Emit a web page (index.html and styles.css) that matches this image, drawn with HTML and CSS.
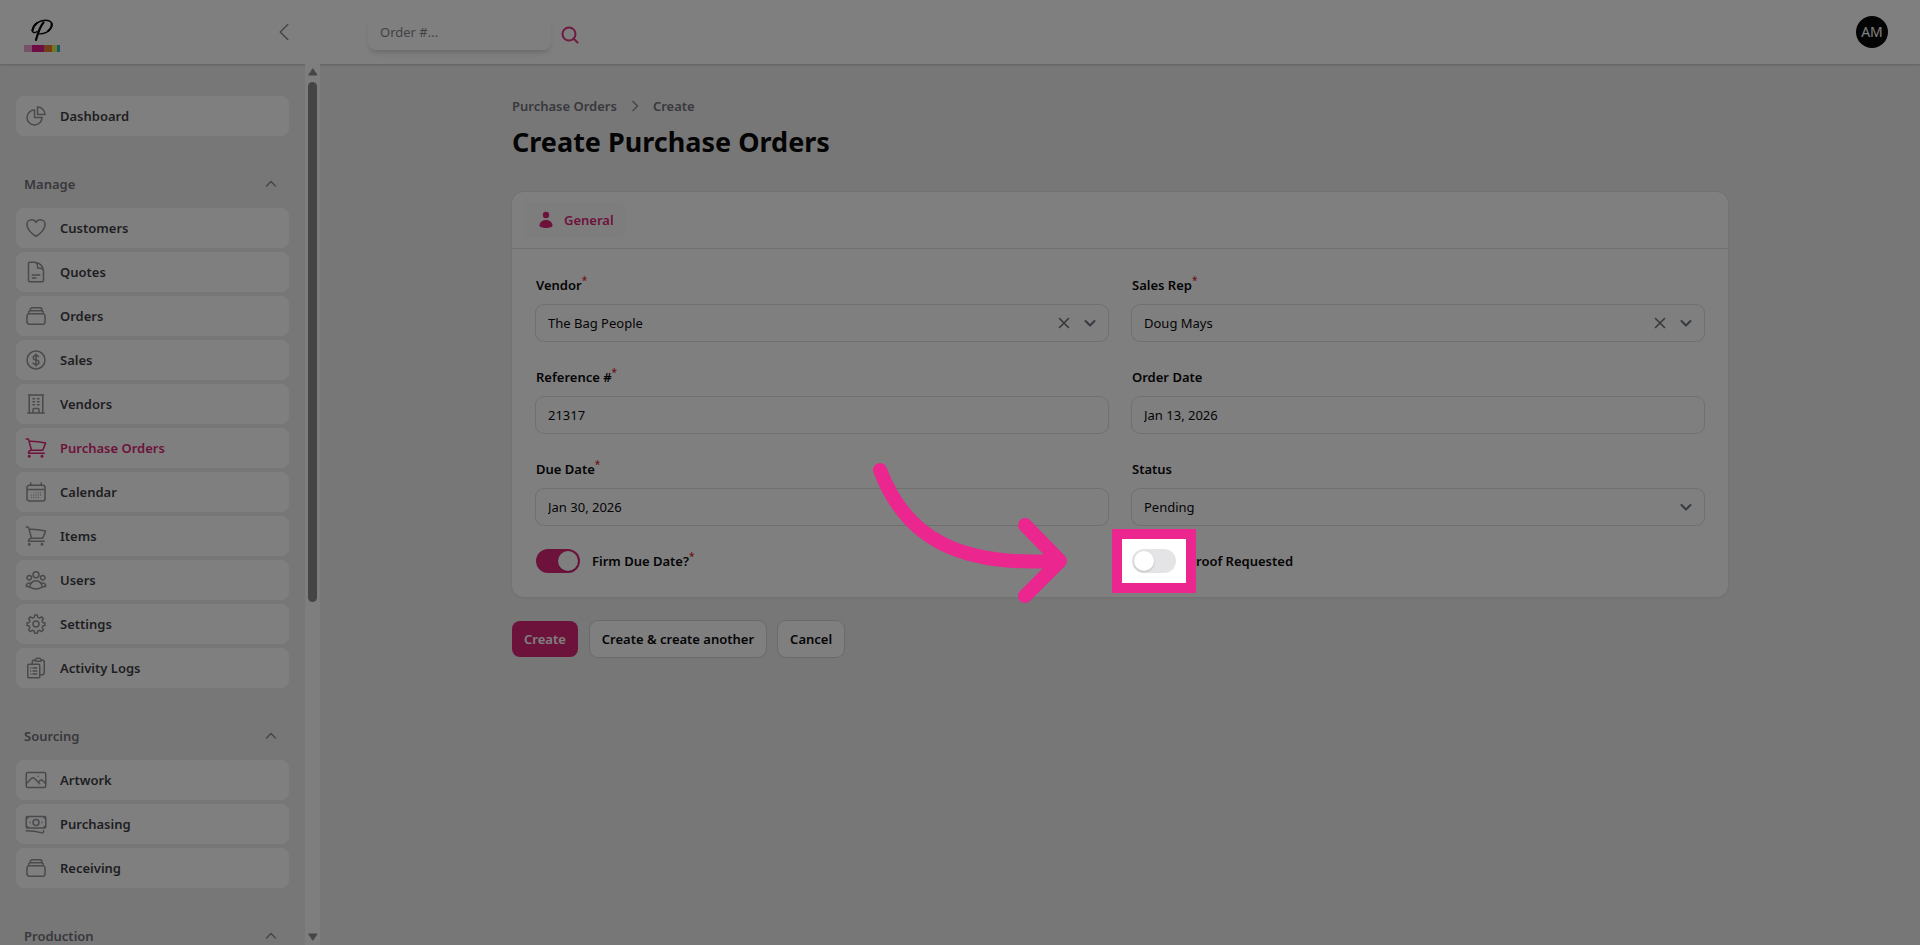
FILE: index.html
```html
<!DOCTYPE html>
<html lang="en">
<head>
	<meta charset="utf-8">
	<meta name="viewport" content="width=device-width, initial-scale=1.0">
	<title>Create Purchase Orders</title>
	<link rel="stylesheet" href="styles.css">
</head>
<body>
	<!-- shared icons -->
	<svg class="sprite" aria-hidden="true">
		<symbol id="i-up" viewBox="0 0 20 20"><path d="M5.500 12l4.500-4.500 4.500 4.500"/></symbol>
		<symbol id="i-down" viewBox="0 0 20 20"><path d="M5.500 8l4.500 4.500 4.500-4.500"/></symbol>
		<symbol id="i-x" viewBox="0 0 20 20"><path d="M5.500 5.500l9 9M14.500 5.500l-9 9"/></symbol>
		<symbol id="i-cart" viewBox="0 0 24 24"><path d="M2.200 3h1.400c.5 0 1 .35 1.100.85l2.800 10.400M7.500 14.250a3 3 0 0 0-3 3h15.750M7.500 14.250h11.200c1.100-2.300 2.100-4.700 2.900-7.150A60 60 0 0 0 5.100 5.270M6 20.250a.75.75 0 1 1-1.500 0 .75.75 0 0 1 1.500 0zm12.750 0a.75.75 0 1 1-1.500 0 .75.75 0 0 1 1.500 0z"/></symbol>
		<symbol id="i-stack" viewBox="0 0 24 24"><path d="M6 6.880V6a2.250 2.250 0 0 1 2.250-2.250h7.500A2.250 2.250 0 0 1 18 6v.880M6 6.880c.23-.08.490-.130.750-.130h10.500c.26 0 .510.050.750.130M6 6.880A2.250 2.250 0 0 0 4.500 9v.880m13.500-3A2.250 2.250 0 0 1 19.500 9v.880m0 0a2.250 2.250 0 0 0-.750-.130H5.250c-.260 0-.520.050-.750.130m15 0A2.250 2.250 0 0 1 21 12v6a2.250 2.250 0 0 1-2.250 2.250H5.250A2.250 2.250 0 0 1 3 18v-6c0-.980.630-1.810 1.500-2.120"/></symbol>
	</svg>

	<header class="topbar">
		<div class="brand">
			<a href="#" class="logo" aria-label="Home">
				<svg viewBox="0 0 36 34" width="36" height="34">
					<g fill="none" stroke="#050505" stroke-linecap="round">
						<path stroke-width="2.200" d="M19.500 4.500C15.500 9 14 15 12 22"/>
						<path stroke-width="1.400" d="M13 13.500c-2.500 2-4.900 1.200-4.700-1.500C9 6.500 15 2.300 21.500 2.300c5.500 0 7.600 3 6 6.700-1.800 4.500-7.500 7.500-13.500 6.800"/>
						<path stroke-width="2" d="M8.400 12.800C9 9.500 10.500 7 13 5M27.600 5.500c.4 3-1 5.500-3.600 7.500"/>
					</g>
					<path fill="#efa4cc" d="M0 27h8v7H0z"/>
					<path fill="#d91c8b" d="M8 27h12v7H8z"/>
					<path fill="#e57a35" d="M20 27h8v7h-8z"/>
					<path fill="#eded4c" d="M28 27h5v7h-5z"/>
					<path fill="#20b4d4" d="M33 27h3v7h-3z"/>
				</svg>
			</a>
			<button type="button" class="collapse" aria-label="Collapse sidebar">
				<svg class="icon" viewBox="0 0 24 24"><path d="M15.750 19.500L8.250 12l7.500-7.500"/></svg>
			</button>
		</div>
		<form class="search">
			<input type="text" placeholder="Order #..." aria-label="Order number">
			<button type="button" aria-label="Search">
				<svg viewBox="0 0 20 20"><circle cx="9" cy="9" r="6.500"/><path d="M13.700 13.700L17.500 17.500"/></svg>
			</button>
		</form>
		<button type="button" class="avatar">AM</button>
	</header>

	<div class="layout">
		<aside class="sidebar">
			<nav class="nav">
				<ul class="group">
					<li><a href="#"><svg class="icon" viewBox="0 0 24 24"><path d="M10.500 6a7.500 7.500 0 1 0 7.500 7.500h-7.500V6z"/><path d="M13.500 10.500H21A7.500 7.500 0 0 0 13.500 3v7.500z"/></svg>Dashboard</a></li>
				</ul>
				<div class="group">
					<button type="button" class="group-title">Manage<svg><use href="#i-up"/></svg></button>
					<ul>
						<li><a href="#"><svg class="icon" viewBox="0 0 24 24"><path d="M21 8.250c0-2.480-2.100-4.500-4.690-4.500-1.930 0-3.600 1.130-4.310 2.730-.710-1.600-2.380-2.730-4.310-2.730C5.100 3.750 3 5.770 3 8.250c0 7.220 9 12 9 12s9-4.780 9-12z"/></svg>Customers</a></li>
						<li><a href="#"><svg class="icon" viewBox="0 0 24 24"><path d="M19.500 14.250v-2.620a3.380 3.380 0 0 0-3.380-3.380h-1.500a1.120 1.120 0 0 1-1.120-1.120v-1.500a3.380 3.380 0 0 0-3.380-3.380H8.250m0 12.750h7.500m-7.500 3H12M10.500 2.250H5.630c-.620 0-1.130.5-1.130 1.120v17.250c0 .620.510 1.130 1.130 1.130h12.750c.620 0 1.120-.510 1.120-1.130V11.250a9 9 0 0 0-9-9z"/></svg>Quotes</a></li>
						<li><a href="#"><svg class="icon"><use href="#i-stack"/></svg>Orders</a></li>
						<li><a href="#"><svg class="icon" viewBox="0 0 24 24"><path d="M12 6v12m-3-2.820l.880.660c1.170.880 3.070.880 4.240 0s1.170-2.300 0-3.180C13.540 12.220 12.770 12 12 12c-.730 0-1.450-.220-2-.660-1.110-.880-1.110-2.300 0-3.180s2.900-.880 4.010 0l.410.330M21 12a9 9 0 1 1-18 0 9 9 0 0 1 18 0z"/></svg>Sales</a></li>
						<li><a href="#"><svg class="icon" viewBox="0 0 24 24"><path d="M3.750 21h16.500M4.500 3h15M5.250 3v18m13.500-18v18M9 6.750h1.500m-1.500 3h1.500m-1.500 3h1.500m3-6H15m-1.500 3H15m-1.500 3H15M9 21v-3.380c0-.620.500-1.120 1.130-1.120h3.750c.620 0 1.120.5 1.120 1.120V21"/></svg>Vendors</a></li>
						<li><a href="#" class="active"><svg class="icon"><use href="#i-cart"/></svg>Purchase Orders</a></li>
						<li><a href="#"><svg class="icon" viewBox="0 0 24 24"><path d="M6.750 3v2.250M17.250 3v2.250M3 18.750V7.500a2.250 2.250 0 0 1 2.250-2.250h13.500A2.250 2.250 0 0 1 21 7.500v11.250M3 18.750A2.250 2.250 0 0 0 5.250 21h13.500A2.250 2.250 0 0 0 21 18.750M3 9.500h18"/><path stroke-width="1.200" d="M12 12.750h.01M12 15h.01M12 17.250h.01M9.750 15h.01M9.750 17.250h.01M7.500 15h.01M7.500 17.250h.01M14.250 12.750h.01M14.250 15h.01M14.250 17.250h.01M16.500 12.750h.01M16.500 15h.01"/></svg>Calendar</a></li>
						<li><a href="#"><svg class="icon"><use href="#i-cart"/></svg>Items</a></li>
						<li><a href="#"><svg class="icon" viewBox="0 0 24 24"><path d="M18 18.720a9.090 9.090 0 0 0 3.740-.480 3 3 0 0 0-4.680-2.720m.940 3.200v.030c0 .230-.010.450-.040.670A11.940 11.940 0 0 1 12 21c-2.170 0-4.210-.580-5.960-1.580A6.060 6.060 0 0 1 6 18.720m12 0a5.970 5.970 0 0 0-.940-3.200m0 0A6 6 0 0 0 12 12.750a6 6 0 0 0-5.060 2.770m0 0a3 3 0 0 0-4.680 2.720 8.990 8.990 0 0 0 3.740.480m.940-3.200A5.970 5.970 0 0 0 6 18.720M15 6.750a3 3 0 1 1-6 0 3 3 0 0 1 6 0zm6 3a2.250 2.250 0 1 1-4.500 0 2.250 2.250 0 0 1 4.500 0zm-13.500 0a2.250 2.250 0 1 1-4.500 0 2.250 2.250 0 0 1 4.500 0z"/></svg>Users</a></li>
						<li><a href="#"><svg class="icon" viewBox="0 0 24 24"><path d="M10.700 3h2.600l.5 2.400 1.700.7 2.100-1.300 1.800 1.800-1.300 2.100.7 1.700 2.200.5v2.600l-2.200.5-.7 1.700 1.300 2.100-1.800 1.800-2.100-1.300-1.700.7-.5 2.200h-2.600l-.5-2.200-1.700-.7-2.100 1.300-1.800-1.800 1.300-2.100-.7-1.700-2.200-.5v-2.600l2.200-.5.7-1.700-1.300-2.100 1.800-1.800 2.100 1.300 1.700-.7z"/><circle cx="12" cy="12" r="3"/></svg>Settings</a></li>
						<li><a href="#"><svg class="icon" viewBox="0 0 24 24"><path d="M9 12h3.750M9 15h3.750M9 18h3.750m3 .750H18a2.250 2.250 0 0 0 2.250-2.250V6.110c0-1.140-.840-2.100-1.980-2.190a48 48 0 0 0-1.120-.080m-5.800 0a2.250 2.250 0 0 0-.100.660c0 .410.340.750.750.750h4.500a.75.75 0 0 0 .750-.750 2.250 2.250 0 0 0-.100-.660m-5.800 0A2.250 2.250 0 0 1 13.500 2.250H15c1.010 0 1.870.670 2.150 1.590m-5.800 0c-.380.020-.750.050-1.130.080C9.100 4.010 8.250 4.970 8.250 6.110V8.250m0 0H4.880c-.630 0-1.130.500-1.130 1.130v11.250c0 .620.500 1.120 1.130 1.120h9.750c.620 0 1.120-.500 1.120-1.120V9.380c0-.630-.500-1.130-1.120-1.130H8.250zM6.750 12h.01M6.750 15h.01M6.750 18h.01"/></svg>Activity Logs</a></li>
					</ul>
				</div>
				<div class="group">
					<button type="button" class="group-title">Sourcing<svg><use href="#i-up"/></svg></button>
					<ul>
						<li><a href="#"><svg class="icon" viewBox="0 0 24 24"><path d="M2.250 15.750l5.160-5.160a2.250 2.250 0 0 1 3.180 0l5.160 5.160m-1.500-1.500l1.410-1.410a2.250 2.250 0 0 1 3.180 0l2.910 2.910M3.750 19.500h16.500a1.500 1.500 0 0 0 1.500-1.500V6a1.500 1.500 0 0 0-1.500-1.500H3.750A1.500 1.500 0 0 0 2.250 6v12a1.500 1.500 0 0 0 1.500 1.500zM14.250 8.250h.01"/></svg>Artwork</a></li>
						<li><a href="#"><svg class="icon" viewBox="0 0 24 24"><path d="M2.250 18.750a60 60 0 0 1 15.800 2.100c.72.200 1.450-.340 1.450-1.090V18.750M3.400 4.500h17.200c.64 0 1.150.5 1.150 1.130v9.240c0 .63-.5 1.130-1.150 1.130H3.400c-.64 0-1.150-.5-1.150-1.130V5.630c0-.63.5-1.130 1.150-1.130zM2.250 6.300a1.800 1.800 0 0 0 1.800-1.800M21.750 6.300a1.800 1.800 0 0 1-1.800-1.800M2.250 14.200a1.800 1.800 0 0 1 1.800 1.800M21.750 14.200a1.800 1.800 0 0 0-1.800 1.800M15 10.500a3 3 0 1 1-6 0 3 3 0 0 1 6 0zm3 0h.01M6 10.500h.01"/></svg>Purchasing</a></li>
						<li><a href="#"><svg class="icon"><use href="#i-stack"/></svg>Receiving</a></li>
					</ul>
				</div>
				<div class="group">
					<button type="button" class="group-title">Production<svg><use href="#i-up"/></svg></button>
				</div>
			</nav>
			<div class="scrollbar" aria-hidden="true">
				<svg viewBox="0 0 10 8"><path d="M5 1L9 7H1z"/></svg>
				<div class="track"><div class="thumb"></div></div>
				<svg viewBox="0 0 10 8"><path d="M1 1h8L5 7z"/></svg>
			</div>
		</aside>

		<main class="main">
			<div class="page">
				<nav class="crumbs">
					<a href="#">Purchase Orders</a>
					<svg viewBox="0 0 20 20"><path d="M8 5.500l4.500 4.500L8 14.500"/></svg>
					<a href="#">Create</a>
				</nav>
				<h1>Create Purchase Orders</h1>

				<form>
					<section class="card">
						<div class="tabs">
							<button type="button" class="tab">
								<svg viewBox="0 0 20 20"><circle cx="10" cy="5" r="3.200"/><path d="M3.400 15.200C4 11.800 6.800 10 10 10s6 1.800 6.600 5.200c0 1.700-3.100 2.800-6.600 2.800s-6.600-1.100-6.600-2.800z"/></svg>
								General
							</button>
						</div>
						<div class="fields">
							<div class="field">
								<label for="vendor">Vendor<sup>*</sup></label>
								<div class="control">
									<input type="text" id="vendor" value="The Bag People">
									<button type="button" aria-label="Clear vendor"><svg><use href="#i-x"/></svg></button>
									<button type="button" aria-label="Choose vendor" class="arrow"><svg><use href="#i-down"/></svg></button>
								</div>
							</div>
							<div class="field">
								<label for="rep">Sales Rep<sup>*</sup></label>
								<div class="control">
									<input type="text" id="rep" value="Doug Mays">
									<button type="button" aria-label="Clear sales rep"><svg><use href="#i-x"/></svg></button>
									<button type="button" aria-label="Choose sales rep" class="arrow"><svg><use href="#i-down"/></svg></button>
								</div>
							</div>
							<div class="field">
								<label for="reference">Reference #<sup>*</sup></label>
								<div class="control"><input type="text" id="reference" value="21317"></div>
							</div>
							<div class="field">
								<label for="order-date">Order Date</label>
								<div class="control"><input type="text" id="order-date" value="Jan 13, 2026"></div>
							</div>
							<div class="field">
								<label for="due-date">Due Date<sup>*</sup></label>
								<div class="control"><input type="text" id="due-date" value="Jan 30, 2026"></div>
							</div>
							<div class="field">
								<label for="status">Status</label>
								<div class="control">
									<select id="status"><option>Pending</option></select>
									<svg class="caret"><use href="#i-down"/></svg>
								</div>
							</div>
							<div class="switch">
								<input type="checkbox" id="firm" checked>
								<label for="firm">Firm Due Date?<sup>*</sup></label>
							</div>
							<div class="switch">
								<input type="checkbox" id="proof">
								<label for="proof">Proof Requested</label>
								<!-- tour highlight: dims everything but the switch -->
								<div class="spotlight"></div>
								<svg class="pointer" viewBox="0 0 200 146"><path d="M10 11C36 80 90 107 184 102M155 66l35 36-35 35"/></svg>
							</div>
						</div>
					</section>
					<div class="actions">
						<button type="submit" class="btn primary">Create</button>
						<button type="button" class="btn">Create &amp; create another</button>
						<button type="button" class="btn">Cancel</button>
					</div>
				</form>
			</div>
		</main>
	</div>
</body>
</html>
```
FILE: styles.css
```css
* {
	box-sizing: border-box;
}
body {
	margin: 0;
	height: 100vh;
	overflow: hidden;
	display: flex;
	flex-direction: column;
	background: #eeeeef;
	color: #09090b;
	font-family: "Noto Sans", "Open Sans", sans-serif;
	font-size: 13px;
	line-height: 24px;
}
button, input, select {
	margin: 0;
	padding: 0;
	border: 0;
	background: none;
	color: inherit;
	font: inherit;
}
button {
	cursor: pointer;
}
a {
	color: inherit;
	text-decoration: none;
}
ul {
	margin: 0;
	padding: 0;
	list-style: none;
}
svg {
	display: block;
	flex: none;
	width: 20px;
	height: 20px;
	fill: none;
	stroke: currentColor;
	stroke-width: 2;
	stroke-linecap: round;
	stroke-linejoin: round;
}
.sprite {
	position: absolute;
	width: 0;
	height: 0;
}
.icon {
	width: 24px;
	height: 24px;
	stroke-width: 1.5;
}

/* top bar */
.topbar {
	flex: none;
	display: flex;
	align-items: center;
	height: 64px;
	padding-right: 32px;
	background: #fff;
	box-shadow: 0 1px 2px rgba(0, 0, 0, 0.2);
}
.brand {
	display: flex;
	align-items: center;
	justify-content: space-between;
	width: 320px;
	padding: 0 24px;
}
.logo svg {
	width: 36px;
	height: 34px;
	margin-top: 6px;
	stroke: none;
}
.collapse {
	color: #8a8a90;
}
.search {
	display: flex;
	align-items: center;
	gap: 9px;
	margin-left: 48px;
}
.search input {
	width: 183px;
	height: 36px;
	padding: 0 12px;
	border-radius: 8px;
	outline: none;
	box-shadow: 0 4px 6px -2px rgba(0, 0, 0, 0.2);
}
.search input::placeholder {
	color: #85858c;
}
.search button {
	padding-top: 6px;
	color: #de3480;
}
.avatar {
	width: 32px;
	height: 32px;
	margin-left: auto;
	border-radius: 50%;
	background: #09090b;
	color: #fff;
	font-size: 14px;
}

.layout {
	flex: 1;
	display: flex;
	min-height: 0;
}

/* sidebar */
.sidebar {
	display: flex;
	flex: none;
	width: 320px;
}
.nav {
	flex: 1;
	display: flex;
	flex-direction: column;
	gap: 28px;
	padding: 32px 16px;
	overflow: hidden;
	font-weight: 600;
}
.group {
	flex: none;
}
.group ul {
	display: grid;
	gap: 4px;
}
.group a {
	display: flex;
	align-items: center;
	gap: 12px;
	height: 40px;
	padding: 0 8px;
	border-radius: 8px;
	background: #fff;
	color: #3f3f46;
}
.group a .icon {
	color: #94949b;
}
.group a.active,
.group a.active .icon {
	color: #db2777;
}
.group-title {
	display: flex;
	align-items: center;
	justify-content: space-between;
	width: 100%;
	height: 40px;
	margin-bottom: 4px;
	padding: 0 8px;
	color: #71717a;
	font-weight: 600;
}
.group-title svg {
	color: #8e8e95;
	stroke-width: 1.5;
}
.scrollbar {
	display: flex;
	flex-direction: column;
	align-items: center;
	gap: 6px;
	width: 15px;
	padding: 4px 0;
	background: #fcfcfc;
}
.scrollbar svg {
	width: 10px;
	height: 8px;
	fill: #8b8b8b;
	stroke: #8b8b8b;
	stroke-width: 1;
}
.track {
	flex: 1;
	width: 9px;
}
.thumb {
	height: 61.5%;
	border-radius: 5px;
	background: #8b8b8b;
}

/* page */
.main {
	flex: 1;
	padding: 30px 32px;
}
.page {
	max-width: 1216px;
	margin: 0 auto;
}
.crumbs {
	display: flex;
	align-items: center;
	gap: 8px;
	color: #71717a;
	font-weight: 600;
}
.crumbs svg {
	color: #8e8e95;
	stroke-width: 1.5;
}
h1 {
	margin: 6px 0 32px;
	font-size: 27px;
	line-height: 36px;
}
.card {
	border-radius: 12px;
	background: #fff;
	box-shadow: 0 0 0 1px #e4e4e7, 0 1px 2px rgba(0, 0, 0, 0.1);
}
.tabs {
	display: flex;
	padding: 10px 12px;
	border-bottom: 1px solid #dedee1;
}
.tab {
	display: flex;
	align-items: center;
	gap: 8px;
	height: 36px;
	padding: 0 12px;
	border-radius: 8px;
	background: #fbfbfb;
	color: #db2777;
	font-weight: 600;
}
.tab svg {
	fill: currentColor;
	stroke: none;
}
.fields {
	display: grid;
	grid-template-columns: 1fr 1fr;
	gap: 24px;
	padding: 24px;
}
.field {
	display: grid;
	gap: 8px;
}
label {
	font-weight: 600;
}
sup {
	color: #dc2626;
	font-size: 10px;
	font-weight: 500;
	line-height: 0;
	vertical-align: 6px;
}
.control {
	position: relative;
	display: flex;
	align-items: center;
	gap: 6px;
	height: 36px;
	padding-right: 8px;
	border-radius: 8px;
	box-shadow: 0 0 0 1px #dedee1;
}
.control input,
.control select {
	flex: 1;
	align-self: stretch;
	padding: 0 12px;
	outline: none;
	appearance: none;
}
.control svg {
	color: #6c6c72;
	stroke-width: 1.5;
}
.control .arrow svg,
.control .caret {
	color: #6b7280;
	stroke-width: 2;
}
.caret {
	pointer-events: none;
}

.switch {
	position: relative;
	display: flex;
	align-items: center;
	gap: 12px;
}
.switch input {
	display: flex;
	width: 44px;
	height: 24px;
	padding: 2px;
	border-radius: 12px;
	appearance: none;
	background: #e4e4e7;
	cursor: pointer;
}
.switch input::before {
	content: "";
	width: 20px;
	height: 20px;
	border-radius: 50%;
	background: #fff;
	box-shadow: 0 1px 2px rgba(0, 0, 0, 0.2);
}
.switch input:checked {
	justify-content: flex-end;
	background: #db2777;
}

/* guided tour overlay */
.spotlight {
	position: absolute;
	top: -20px;
	left: -20px;
	width: 84px;
	height: 64px;
	border: 10px solid #eb268f;
	box-shadow: 0 0 0 9999px rgba(0, 0, 0, 0.5);
	pointer-events: none;
}
.pointer {
	position: absolute;
	top: -90px;
	left: -262px;
	width: 200px;
	height: 146px;
	color: #eb268f;
	stroke-width: 14;
	pointer-events: none;
}

.actions {
	display: flex;
	gap: 12px;
	margin-top: 24px;
}
.btn {
	height: 36px;
	padding: 0 12px;
	border-radius: 8px;
	background: #fff;
	box-shadow: 0 0 0 1px #d4d4d8;
	font-weight: 600;
}
.btn.primary {
	background: #db2777;
	box-shadow: none;
	color: #fff;
}
```
